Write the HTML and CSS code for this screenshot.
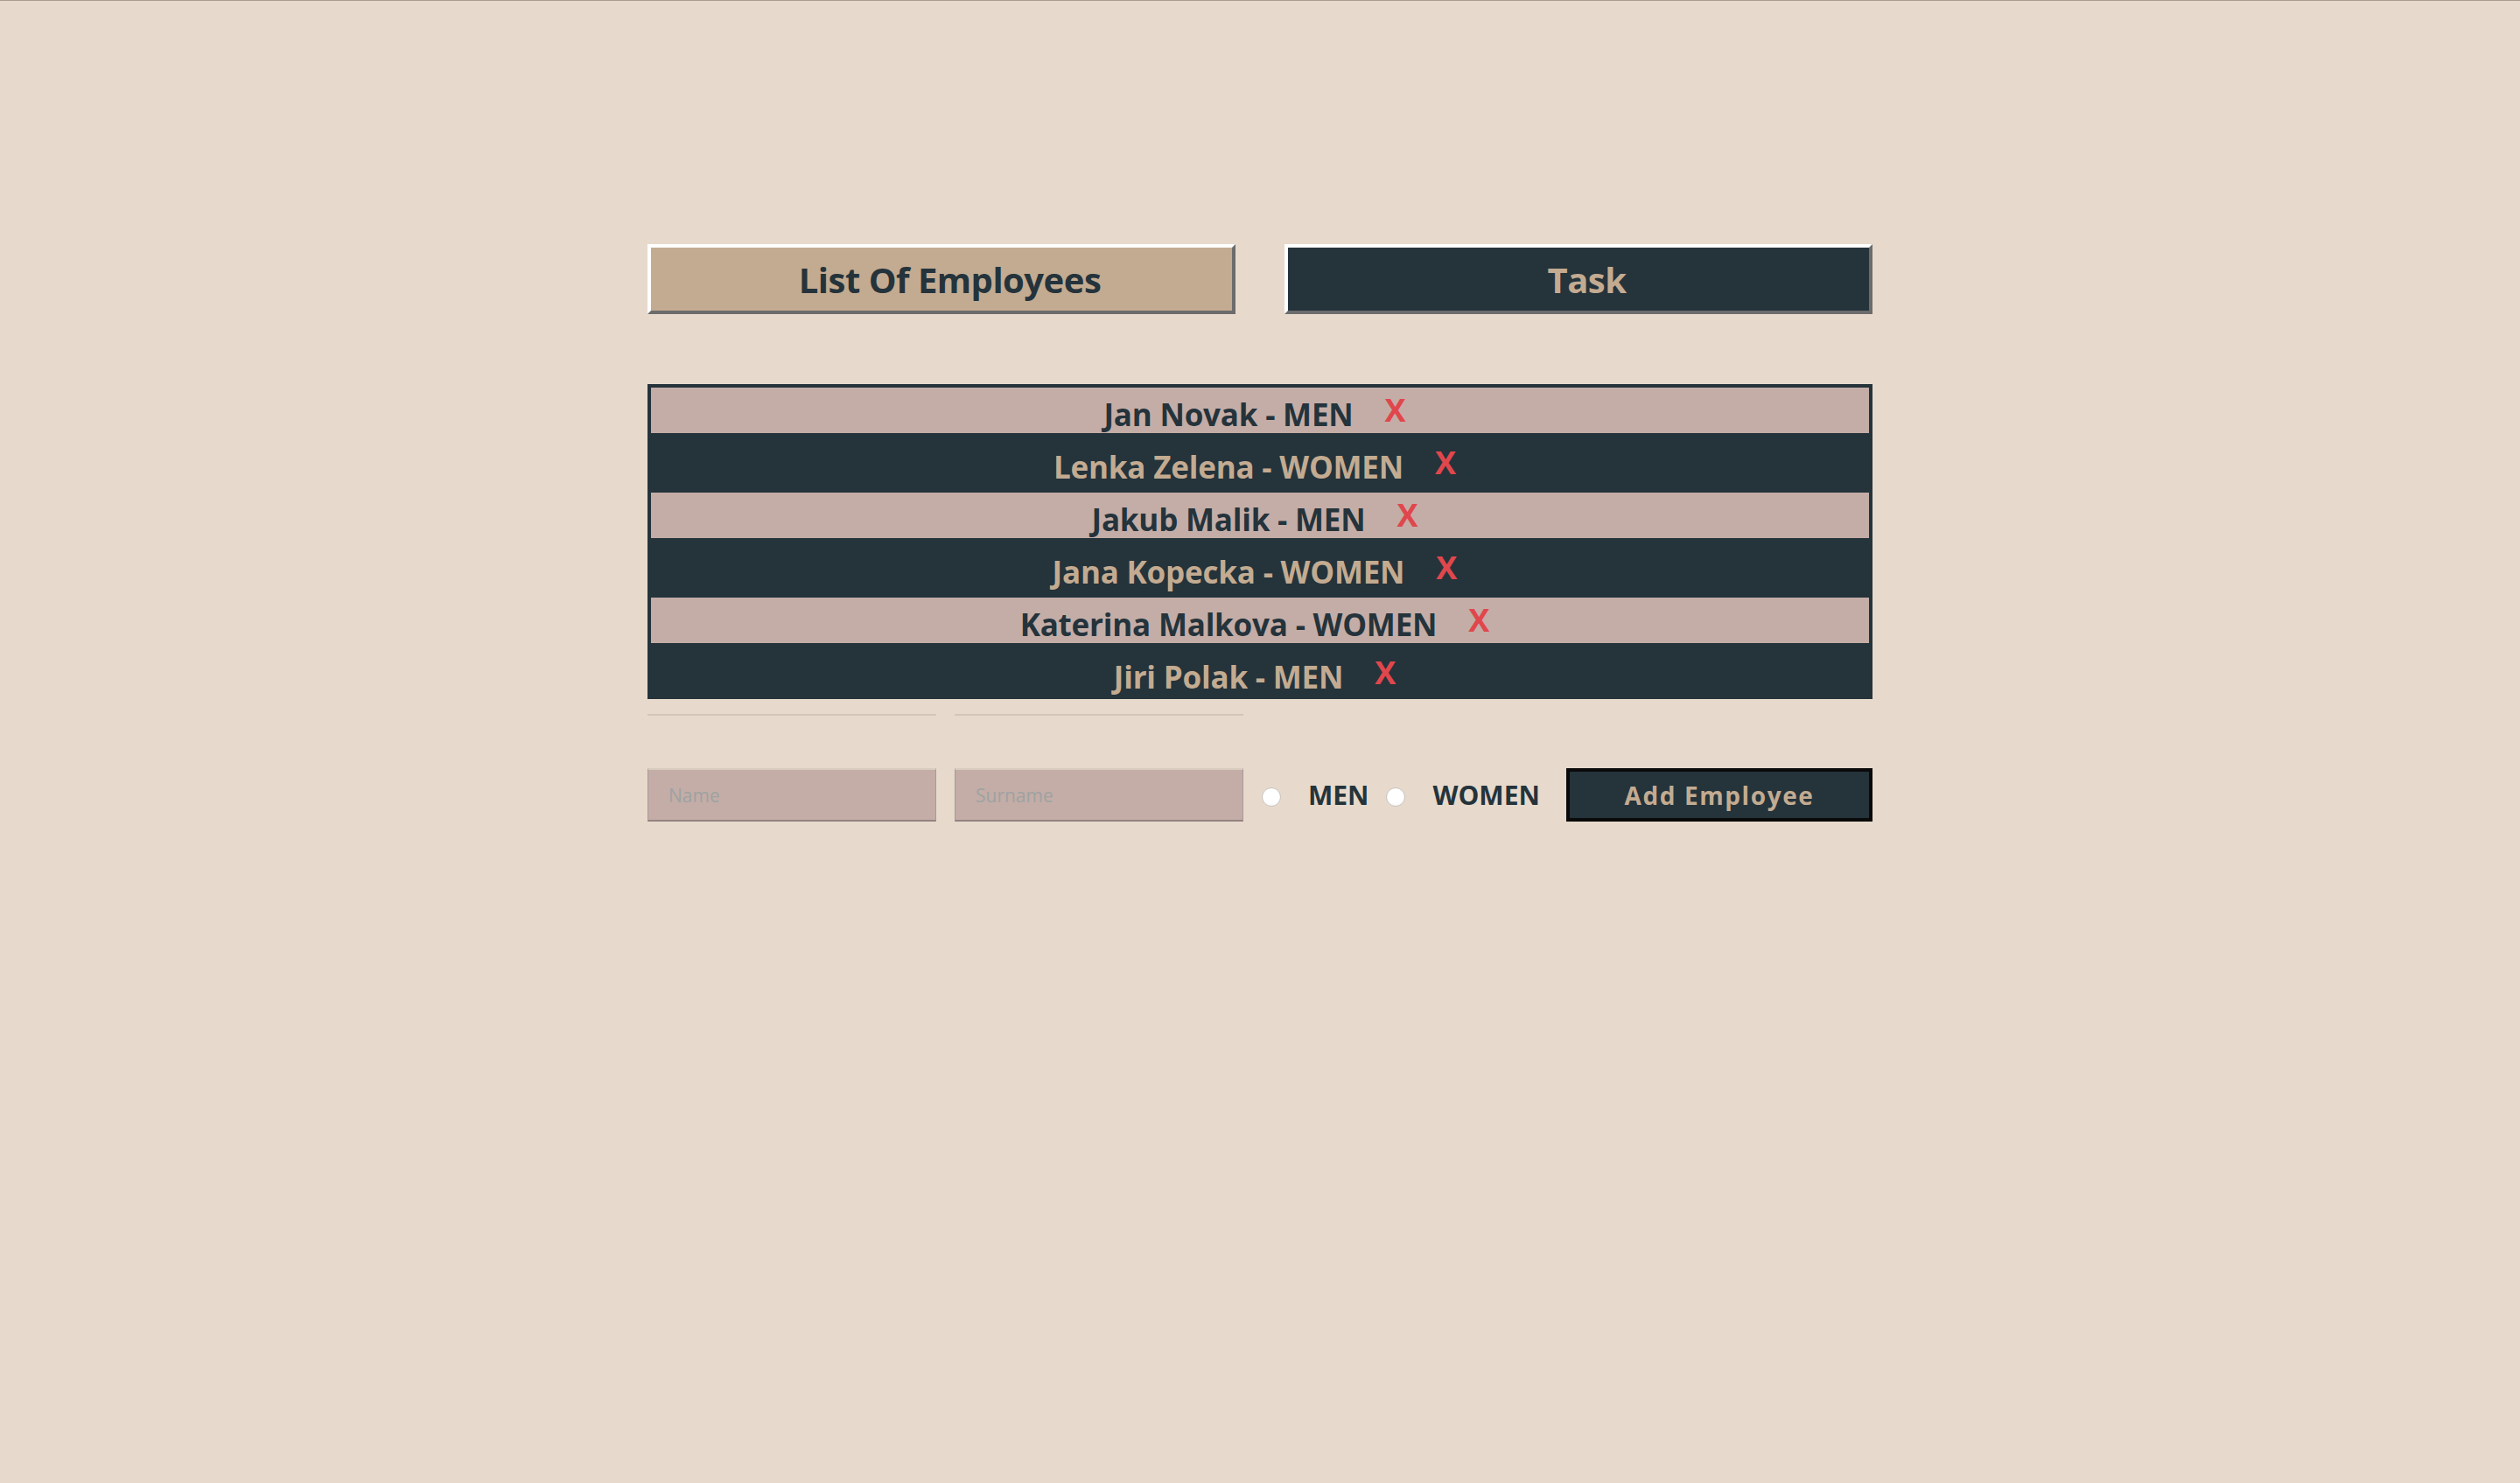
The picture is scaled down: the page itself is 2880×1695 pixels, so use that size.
FILE: index.html
```html
<!DOCTYPE html>
<html lang="en">
<head>
<meta charset="utf-8">
<title>Employees</title>
<link rel="stylesheet" href="styles.css">
</head>
<body>
<div class="app">
  <div class="tabs">
    <button class="tab tab-active">List Of Employees</button>
    <button class="tab tab-dark">Task</button>
  </div>

  <ul class="employees">
    <li class="row row-light"><span class="name">Jan Novak - MEN</span><button class="remove">X</button></li>
    <li class="row row-dark"><span class="name">Lenka Zelena - WOMEN</span><button class="remove">X</button></li>
    <li class="row row-light"><span class="name">Jakub Malik - MEN</span><button class="remove">X</button></li>
    <li class="row row-dark"><span class="name">Jana Kopecka - WOMEN</span><button class="remove">X</button></li>
    <li class="row row-light"><span class="name">Katerina Malkova - WOMEN</span><button class="remove">X</button></li>
    <li class="row row-dark"><span class="name">Jiri Polak - MEN</span><button class="remove">X</button></li>
  </ul>

  <div class="hints">
    <div class="hint"></div>
    <div class="hint"></div>
  </div>

  <form class="add-form">
    <input class="field" type="text" placeholder="Name">
    <input class="field" type="text" placeholder="Surname">
    <label class="choice"><input class="radio" type="radio" name="gender"><span class="choice-text">MEN</span></label>
    <label class="choice"><input class="radio" type="radio" name="gender"><span class="choice-text">WOMEN</span></label>
    <button class="add" type="button">Add Employee</button>
  </form>
</div>
</body>
</html>
```
FILE: styles.css
```css
* { box-sizing: border-box; }

html, body {
  margin: 0;
  padding: 0;
}

body {
  background: #e7dacc;
  border-top: 1px solid #a99d92;
  min-height: 1695px;
  font-family: "Open Sans", "Liberation Sans", sans-serif;
  color: #25333b;
}

.app {
  width: 1400px;
  margin: 0 auto;
  padding-top: 278px;
}

.tabs {
  display: flex;
  justify-content: space-between;
}

.tab {
  width: 672px;
  height: 80px;
  border-style: solid;
  border-width: 4px;
  border-color: #ffffff #6c6c6c #6c6c6c #ffffff;
  font-family: "Open Sans", "Liberation Sans", sans-serif;
  font-weight: 700;
  font-size: 40px;
  letter-spacing: -0.5px;
  padding: 0 0 0 19px;
  cursor: pointer;
}

.tab-active {
  background: #c3ab91;
  color: #25333b;
}

.tab-dark {
  background: #25333b;
  color: #c3ab91;
}

.employees {
  list-style: none;
  margin: 80px 0 0;
  padding: 0;
  border: 4px solid #25333b;
  background: #25333b;
  display: flex;
  flex-direction: column;
  gap: 8px;
}

.row {
  height: 52px;
  padding-top: 6px;
  text-align: center;
  font-weight: 700;
  font-size: 35px;
  line-height: 48px;
  white-space: nowrap;
  padding-left: 0;
}

.row-light {
  background: #c4ada7;
  color: #25333b;
}

.row-dark {
  background: #25333b;
  color: #c3ab91;
}

.name {
  letter-spacing: -0.2px;
}

.remove {
  background: none;
  border: none;
  color: #e0474c;
  font-family: "Open Sans", "Liberation Sans", sans-serif;
  font-weight: 700;
  font-size: 36px;
  line-height: 40px;
  padding: 0 12px;
  margin-left: 24px;
  vertical-align: 5px;
  cursor: pointer;
}

.hints {
  display: flex;
  gap: 21px;
  margin-top: 17px;
}

.hint {
  width: 330px;
  height: 2px;
  border: 1px solid #d2c6b8;
}

.add-form {
  display: flex;
  align-items: center;
  margin-top: 60px;
}

.field {
  width: 330px;
  height: 61px;
  background: #c4ada7;
  border-style: solid;
  border-width: 2px 1px 2px 1px;
  border-color: #d8ccbe #a8999a #928381 #a8999a;
  padding: 0 0 0 23px;
  font-family: "Open Sans", "Liberation Sans", sans-serif;
  font-size: 21px;
  color: #25333b;
  outline: none;
}

.field + .field {
  margin-left: 21px;
}

.field::placeholder {
  color: #9ea2a2;
}

.choice {
  display: flex;
  align-items: center;
  margin-left: 21px;
}

.choice + .choice {
  margin-left: 20px;
}

.radio {
  appearance: none;
  -webkit-appearance: none;
  width: 22px;
  height: 22px;
  margin: 4px 0 0;
  border-radius: 50%;
  border: 1px solid #c9c5c2;
  background: radial-gradient(circle at 50% 35%, #ffffff 55%, #f1f1f1 100%);
}

.choice-text {
  margin-left: 31px;
  font-weight: 700;
  font-size: 30px;
  color: #25333b;
}

.add {
  margin-left: auto;
  width: 350px;
  height: 61px;
  background: #25333b;
  border: 4px solid #0a0a0a;
  color: #c3ab91;
  font-family: "Open Sans", "Liberation Sans", sans-serif;
  font-weight: 700;
  font-size: 28px;
  letter-spacing: 1.6px;
  padding: 0;
  cursor: pointer;
}
```
